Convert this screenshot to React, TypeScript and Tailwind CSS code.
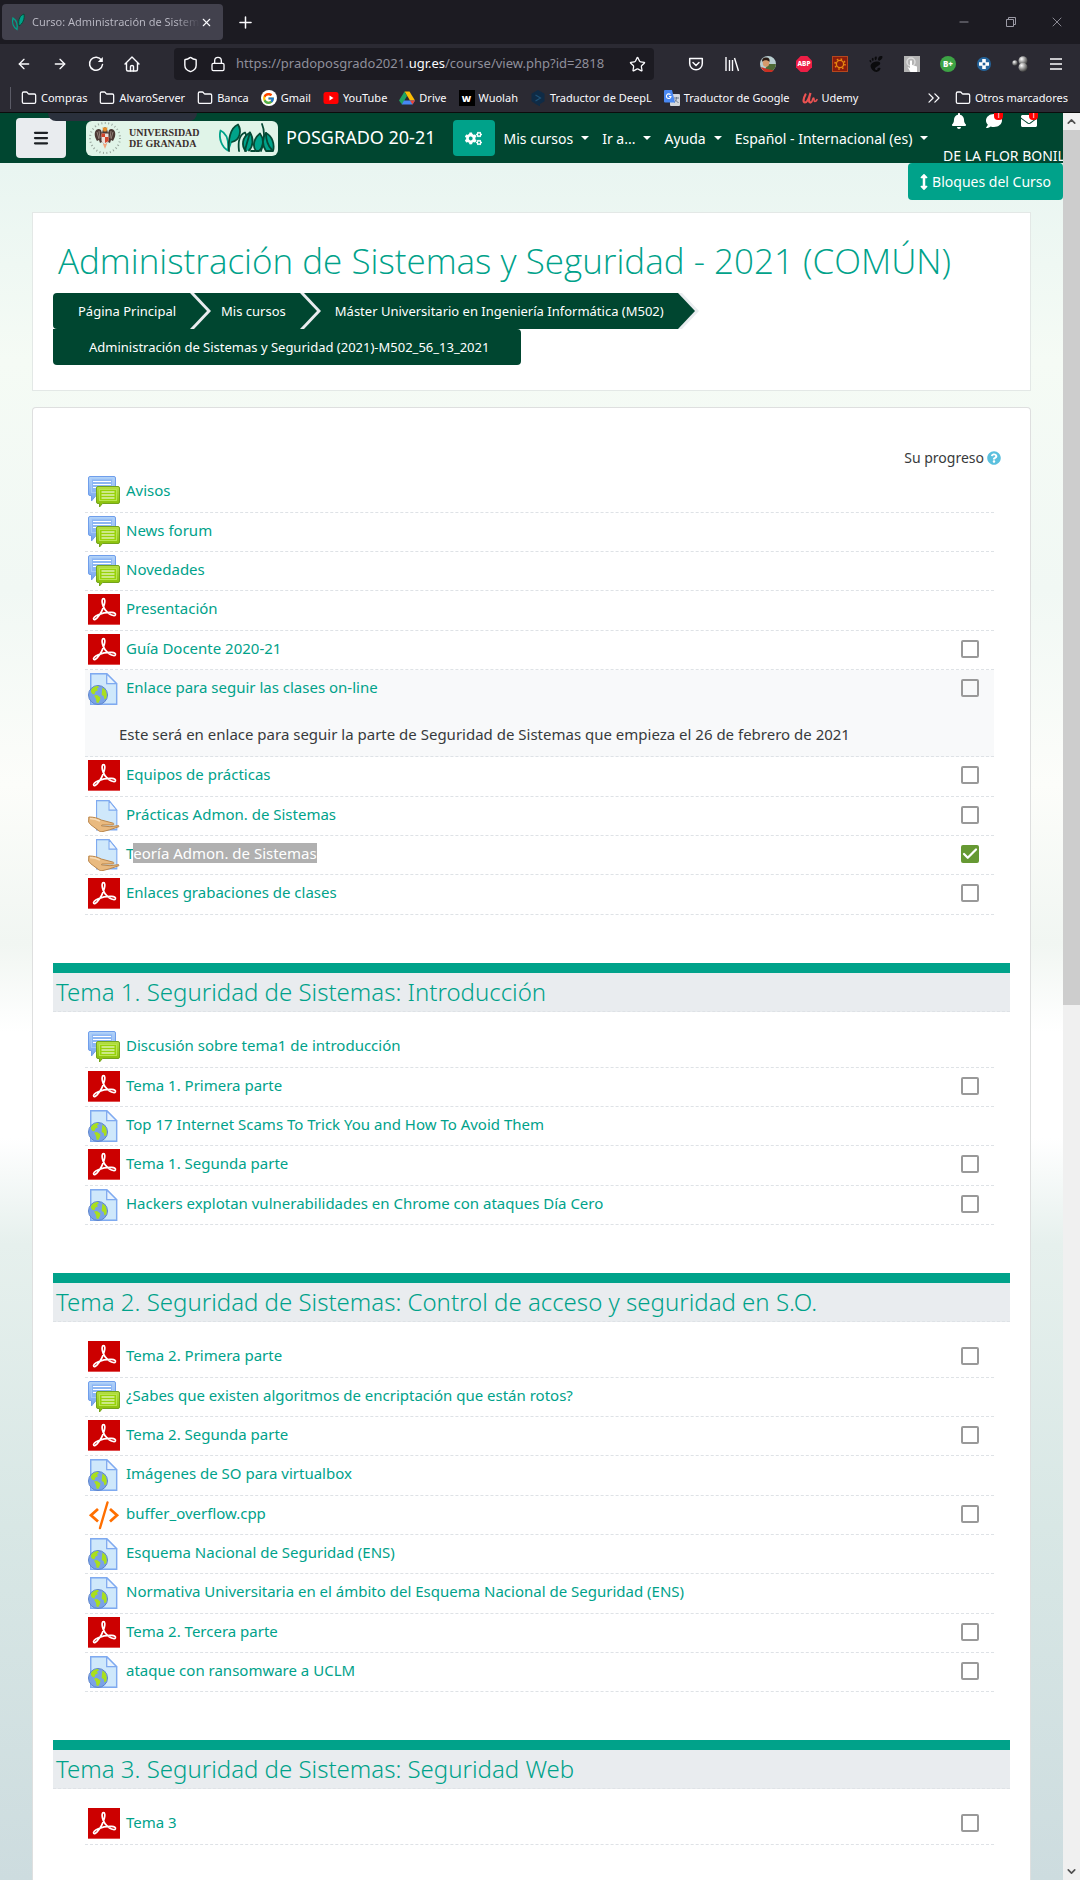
import type { ReactNode } from "react";
import {
  ArrowLeft,
  ArrowRight,
  Check,
  ChevronDown,
  ChevronsRight,
  ChevronUp,
  Copy,
  Folder,
  Lock,
  Menu,
  Minus,
  Plus,
  Shield,
  Star,
  X,
} from "lucide-react";
import { FaArrowsAltV, FaBell, FaCogs, FaComment, FaEnvelope, FaQuestionCircle } from "react-icons/fa";
import { FcGoogle } from "react-icons/fc";
import { SiGnome } from "react-icons/si";

/* ---------- activity icons ---------- */

function PdfIcon() {
  return (
    <svg viewBox="0 0 32 32" className="h-8 w-8">
      <rect width="32" height="30" fill="#c00" />
      <rect y="30" width="32" height="1" fill="#e05050" />
      <path
        d="M15.5 4.6c1.5 0 1.6 2.600.9 5.400-1.200 4.900-4 10.200-7.300 13.900-1.400 1.500-2.700 2.200-3.300 1.600-.9-1 .7-3.300 4.500-4.800 4.200-1.700 9.600-2.500 13.400-2.300 2.900.2 4.200 1.200 3.700 2.400-.6 1.300-3.200.8-5.800-.8-3.300-2.100-6.300-6.200-7.200-10.200-.6-2.700-.3-5.200 1.100-5.200z"
        fill="none"
        stroke="#fff"
        strokeWidth="1.7"
      />
    </svg>
  );
}

function ForumIcon() {
  return (
    <svg viewBox="0 0 32 32" className="h-8 w-8">
      <defs>
        <linearGradient id="fb" x1="0" y1="0" x2="0" y2="1">
          <stop offset="0" stopColor="#b4d4f8" />
          <stop offset="1" stopColor="#76a4ee" />
        </linearGradient>
        <linearGradient id="fg" x1="0" y1="0" x2="0" y2="1">
          <stop offset="0" stopColor="#b5df45" />
          <stop offset="1" stopColor="#84bb00" />
        </linearGradient>
      </defs>
      <path d="M2 .5h24q1.500 0 1.500 1.500v16q0 1.500-1.500 1.500H8L3.500 25V19.500H2Q.5 19.500.5 18V2Q.5.500 2 .5z" fill="url(#fb)" stroke="#6f9eeb" />
      <rect x="3.500" y="3" width="21" height="13.500" fill="#8cb6f3" stroke="#a6c9f8" />
      <path d="M5 5.500h18M5 8.500h18M5 11.500h8" stroke="#fff" strokeWidth="1.100" />
      <path d="M10 10.500h20q1.500 0 1.500 1.500v14q0 1.500-1.500 1.500H14.500L11.500 31V27.500H10Q8.500 27.500 8.500 26V12q0-1.500 1.500-1.500z" fill="url(#fg)" stroke="#73a41c" />
      <rect x="11.500" y="13.500" width="17" height="11" fill="#98d20a" stroke="#b9e64f" />
      <path d="M13.500 16h13M13.500 19h13M13.500 22h13" stroke="#fff" strokeWidth="1.100" />
    </svg>
  );
}

function SheetShape({ x }: { x: number }) {
  return (
    <g transform={`translate(${x} 0)`}>
      <path d="M.7.7h16l10 10v20.600H.7z" fill="#c6e2f9" stroke="#7faaf0" strokeWidth="1.400" />
      <path d="M2 2h14v9.500h9.500V30H2z" fill="#cfe8fb" />
      <path d="M16.700.7v10h10z" fill="#e8f3fd" stroke="#7faaf0" strokeWidth="1.300" strokeLinejoin="round" />
    </g>
  );
}

function UrlIcon() {
  return (
    <svg viewBox="0 0 32 32" className="h-8 w-8">
      <SheetShape x={2} />
      <circle cx="10" cy="22" r="9.500" fill="#7aa2e6" stroke="#5c84cc" />
      <path d="M3 17c1.500-2.500 4-4 7-4.300l.8 1.800-2 1 1.200 1.800-2.500 1.200-1 2.800-2-.3-1.500-2z" fill="#a9df1c" />
      <path d="M6 22.500l3-.5 3.500 2.500-.5 2.500-1.700 3-1.800-.5-.5-3.500z" fill="#a9df1c" />
      <path d="M14.500 14.500l3 2.500 1.200 4-.2 4-2 1.500-.8-3.500-2-1 .3-4z" fill="#a9df1c" />
    </svg>
  );
}

function AssignIcon() {
  return (
    <svg viewBox="0 0 32 32" className="h-8 w-8">
      <g transform="translate(8 0) scale(.78 .95)">
        <SheetShape x={0} />
      </g>
      <path
        d="M.8 17c5 0 9 1 12.500 3l12 3.200c1 .5.600 1.700-.5 1.700l-11 .1-.3.900 8.500.8 8-1c1.300-.1 1.400.6.500 1.100l-9 3-6.500 1.700c-1.500.4-3 .2-4.200-.7L2.500 24.500.6 22z"
        fill="#e9ba80"
        stroke="#bb864a"
        strokeLinejoin="round"
      />
      <path d="M2 18.500c4 .2 7 1 10 2.700" stroke="#f8dcb6" strokeWidth="1.500" fill="none" />
    </svg>
  );
}

function CodeIcon() {
  return (
    <svg viewBox="0 0 32 32" className="h-8 w-8" fill="none" stroke="#ff6f00" strokeWidth="2.800">
      <path d="M10 10L3 16.300l7 6.200M22 10l7 6.300-7 6.200" />
      <path d="M19.500 3.500L12 29" strokeWidth="2.400" strokeLinecap="round" />
    </svg>
  );
}

const ICONS = { pdf: PdfIcon, forum: ForumIcon, url: UrlIcon, assign: AssignIcon, code: CodeIcon };

/* ---------- course data ---------- */

type Box = "off" | "on";
type Item = { kind: keyof typeof ICONS; title: string; box?: Box; note?: string; selectFrom?: number };
type Section = { title?: string; items: Item[] };

const SECTIONS: Section[] = [
  {
    items: [
      { kind: "forum", title: "Avisos" },
      { kind: "forum", title: "News forum" },
      { kind: "forum", title: "Novedades" },
      { kind: "pdf", title: "Presentación" },
      { kind: "pdf", title: "Guía Docente 2020-21", box: "off" },
      {
        kind: "url",
        title: "Enlace para seguir las clases on-line",
        box: "off",
        note: "Este será en enlace para seguir la parte de Seguridad de Sistemas que empieza el 26 de febrero de 2021",
      },
      { kind: "pdf", title: "Equipos de prácticas", box: "off" },
      { kind: "assign", title: "Prácticas Admon. de Sistemas", box: "off" },
      { kind: "assign", title: "Teoría Admon. de Sistemas", box: "on", selectFrom: 1 },
      { kind: "pdf", title: "Enlaces grabaciones de clases", box: "off" },
    ],
  },
  {
    title: "Tema 1. Seguridad de Sistemas: Introducción",
    items: [
      { kind: "forum", title: "Discusión sobre tema1 de introducción" },
      { kind: "pdf", title: "Tema 1. Primera parte", box: "off" },
      { kind: "url", title: "Top 17 Internet Scams To Trick You and How To Avoid Them" },
      { kind: "pdf", title: "Tema 1. Segunda parte", box: "off" },
      { kind: "url", title: "Hackers explotan vulnerabilidades en Chrome con ataques Día Cero", box: "off" },
    ],
  },
  {
    title: "Tema 2. Seguridad de Sistemas: Control de acceso y seguridad en S.O.",
    items: [
      { kind: "pdf", title: "Tema 2. Primera parte", box: "off" },
      { kind: "forum", title: "¿Sabes que existen algoritmos de encriptación que están rotos?" },
      { kind: "pdf", title: "Tema 2. Segunda parte", box: "off" },
      { kind: "url", title: "Imágenes de SO para virtualbox" },
      { kind: "code", title: "buffer_overflow.cpp", box: "off" },
      { kind: "url", title: "Esquema Nacional de Seguridad (ENS)" },
      { kind: "url", title: "Normativa Universitaria en el ámbito del Esquema Nacional de Seguridad (ENS)" },
      { kind: "pdf", title: "Tema 2. Tercera parte", box: "off" },
      { kind: "url", title: "ataque con ransomware a UCLM", box: "off" },
    ],
  },
  {
    title: "Tema 3. Seguridad de Sistemas: Seguridad Web",
    items: [{ kind: "pdf", title: "Tema 3", box: "off" }],
  },
];

/* ---------- browser chrome ---------- */

function TabStrip() {
  return (
    <div className="flex h-11 items-center bg-[#1c1b22] pl-[2px] text-[#fbfbfe]">
      <div className="flex h-9 w-[221px] items-center rounded bg-[#42414d] pl-[9px] pr-[10px]">
        <svg viewBox="0 0 16 18" className="h-[18px] w-4 shrink-0">
          <path d="M2 5c3 2 5 5 4 11.500C2.500 14.500.5 10 2 5z" fill="none" stroke="#00a38a" strokeWidth="1.300" />
          <path d="M13 1C9 2.500 7 6 8 13c3.500-2 6-7 5-12z" fill="#00a38a" stroke="#064a35" />
        </svg>
        <span className="ml-[5px] flex-1 overflow-hidden whitespace-nowrap bg-gradient-to-r from-[#bcbbc6] from-85% to-[#42414d] bg-clip-text text-[11px] leading-5 text-transparent">
          Curso: Administración de Sistem
        </span>
        <button aria-label="Cerrar pestaña" className="shrink-0">
          <X size={13} strokeWidth={2} />
        </button>
      </div>
      <button aria-label="Nueva pestaña" className="ml-[13px]">
        <Plus size={19} strokeWidth={1.9} />
      </button>
      <div className="ml-auto flex items-center gap-[30px] pr-[15px] text-[#9b9aa5]">
        <button aria-label="Minimizar" className="w-4">
          <Minus size={14} strokeWidth={1.5} />
        </button>
        <button aria-label="Restaurar" className="w-4">
          <svg viewBox="0 0 16 16" className="h-4 w-4" fill="none" stroke="currentColor">
            <path d="M3.500 5.500h7v7h-7zM5.500 5.500v-2h7v7h-2" />
          </svg>
        </button>
        <button aria-label="Cerrar" className="w-4">
          <X size={16} strokeWidth={1.3} />
        </button>
      </div>
    </div>
  );
}

function ReloadIcon() {
  return (
    <svg viewBox="0 0 16 16" className="h-4 w-4" fill="none" stroke="currentColor" strokeWidth="1.500">
      <path d="M13.500 4.200A6.500 6.500 0 1 0 14.500 8.500" strokeLinecap="round" />
      <path d="M14.800 1v5H9.800z" fill="currentColor" stroke="none" />
    </svg>
  );
}

function HomeIcon() {
  return (
    <svg viewBox="0 0 16 16" className="h-4 w-4" fill="none" stroke="currentColor" strokeWidth="1.400" strokeLinejoin="round" strokeLinecap="round">
      <path d="M1 8l7-7 7 7M2.500 7v6.500q0 1.500 1.500 1.500h8q1.500 0 1.500-1.500V7" />
      <path d="M6.500 15v-4.500q0-1 1.500-1t1.500 1V15" />
    </svg>
  );
}

const EXTENSIONS: { name: string; icon: ReactNode }[] = [
  {
    name: "Pocket",
    icon: (
      <g fill="none" stroke="#fbfbfe" strokeWidth="1.500" strokeLinecap="round">
        <path d="M1.700 2.500h12.600v5a6.300 6.300 0 0 1-12.600 0z" strokeLinejoin="round" />
        <path d="M5 6.500l3 3 3-3" />
      </g>
    ),
  },
  {
    name: "Biblioteca",
    icon: (
      <g stroke="#fbfbfe" strokeWidth="1.400">
        <path d="M2 1v14M5.500 4v11M8.500 4v11M10.500 2l4 13" />
      </g>
    ),
  },
  {
    name: "Perfil",
    icon: (
      <g>
        <circle cx="8" cy="8" r="8" fill="#b8cdd0" />
        <path d="M8 8h7.900A8 8 0 0 1 4 15z" fill="#4e6a35" />
        <path d="M1 11l6 2 7 1.500A8 8 0 0 1 1 11z" fill="#cc2f22" />
        <ellipse cx="6" cy="6.500" rx="3.300" ry="4.300" fill="#d59a6b" />
        <path d="M2 6C2 2 4 1.300 6.500 1.500S10 3 9.500 6C8 4 4 3.500 2 6z" fill="#2b1b14" />
      </g>
    ),
  },
  {
    name: "Adblock Plus",
    icon: (
      <g>
        <path d="M4.700 0h6.600L16 4.700v6.600L11.300 16H4.700L0 11.300V4.700z" fill="#ed1e45" />
        <text x="8" y="10.300" textAnchor="middle" fontSize="6.500" fontWeight="800" fill="#fff">
          ABP
        </text>
      </g>
    ),
  },
  {
    name: "Engranaje",
    icon: (
      <g>
        <rect width="16" height="16" fill="#8a1c0c" />
        <rect x=".5" y=".5" width="15" height="15" fill="none" stroke="#b5471d" />
        <circle cx="8" cy="8" r="3.600" fill="none" stroke="#e88a10" strokeWidth="1.300" />
        <circle cx="8" cy="8" r="5" fill="none" stroke="#e88a10" strokeWidth="1.500" strokeDasharray="1.600 2.327" />
      </g>
    ),
  },
  { name: "GNOME", icon: <SiGnome size={16} color="#0b0b0d" /> },
  {
    name: "Toque",
    icon: (
      <g>
        <rect width="16" height="16" fill="#b4b4b4" />
        <circle cx="7" cy="6" r="4" fill="none" stroke="#ddd" strokeWidth="1.500" />
        <path d="M6 5q1-1.500 2 0v4l5 1.500V16H6.500L3.500 11l2.500 1z" fill="#fff" />
      </g>
    ),
  },
  {
    name: "B+",
    icon: (
      <g>
        <circle cx="8" cy="8" r="8" fill="#3da345" />
        <text x="8" y="11" textAnchor="middle" fontSize="8" fontWeight="800" fill="#fff">
          B+
        </text>
      </g>
    ),
  },
  {
    name: "Cruz",
    icon: (
      <g>
        <circle cx="8" cy="8" r="7" fill="#25659c" />
        <path d="M6.200 3h3.600v3.200H13v3.600H9.800V13H6.200V9.800H3V6.200h3.200z" fill="#fff" />
        <rect x="6.700" y="6.700" width="2.600" height="2.600" fill="#25659c" />
      </g>
    ),
  },
  {
    name: "Esferas",
    icon: (
      <g>
        <defs>
          <radialGradient id="ball" cx=".35" cy=".3" r=".75">
            <stop offset="0" stopColor="#fff" />
            <stop offset=".4" stopColor="#aaa" />
            <stop offset="1" stopColor="#333" />
          </radialGradient>
        </defs>
        <circle cx="3" cy="7" r="2.700" fill="url(#ball)" />
        <circle cx="11" cy="4.800" r="4.500" fill="url(#ball)" />
        <circle cx="11" cy="11.300" r="4.500" fill="url(#ball)" />
      </g>
    ),
  },
];

function Toolbar() {
  return (
    <div className="flex h-10 items-center bg-[#2b2a33] text-[#fbfbfe]">
      <div className="flex items-center gap-5 pl-4">
        <button aria-label="Atrás">
          <ArrowLeft size={16} />
        </button>
        <button aria-label="Adelante">
          <ArrowRight size={16} />
        </button>
        <button aria-label="Recargar">
          <ReloadIcon />
        </button>
        <button aria-label="Inicio">
          <HomeIcon />
        </button>
      </div>
      <div className="ml-[34px] flex h-8 flex-1 items-center rounded bg-[#1c1b22] px-2">
        <Shield size={17} strokeWidth={2} />
        <Lock size={16} strokeWidth={2} className="ml-[11px]" />
        <div role="textbox" aria-label="Dirección" className="ml-[10px] flex-1 whitespace-nowrap text-[13px] text-[#8f8f9b]">
          https://pradoposgrado2021.<span className="text-[#fbfbfe]">ugr.es</span>/course/view.php?id=2818
        </div>
        <button aria-label="Añadir marcador">
          <Star size={17} strokeWidth={1.8} />
        </button>
      </div>
      <div className="ml-[34px] flex items-center gap-5 pr-4">
        {EXTENSIONS.map((e) => (
          <button key={e.name} aria-label={e.name} className="h-4 w-4">
            <svg viewBox="0 0 16 16" className="h-4 w-4">
              {e.icon}
            </svg>
          </button>
        ))}
        <button aria-label="Menú" className="h-4 w-4">
          <svg viewBox="0 0 16 16" className="h-4 w-4">
            <path d="M2 3h12M2 8h12M2 13h12" stroke="#fbfbfe" strokeWidth="1.600" />
          </svg>
        </button>
      </div>
    </div>
  );
}

const folder = <Folder size={16} strokeWidth={1.9} />;

const BOOKMARKS: { name: string; icon: ReactNode }[] = [
  { name: "Compras", icon: folder },
  { name: "AlvaroServer", icon: folder },
  { name: "Banca", icon: folder },
  {
    name: "Gmail",
    icon: (
      <span className="grid h-4 w-4 place-items-center rounded-full bg-white">
        <FcGoogle size={13} />
      </span>
    ),
  },
  {
    name: "YouTube",
    icon: (
      <svg viewBox="0 0 16 16" className="h-4 w-4">
        <rect x=".5" y="2" width="15" height="12" rx="2.500" fill="#f00" />
        <path d="M6.500 5.500v5l4-2.500z" fill="#fff" />
      </svg>
    ),
  },
  {
    name: "Drive",
    icon: (
      <svg viewBox="0 0 16 16" className="h-4 w-4">
        <path d="M5.500 1.500h5L16 10.500h-5z" fill="#fbbc04" />
        <path d="M5.500 1.500L8 6 3 14.500 0 10.500z" fill="#1fa463" />
        <path d="M5 10.500h11L13.500 14.500H2.700z" fill="#4688f4" />
        <path d="M11 10.500h5l-2.500 4z" fill="#ea4335" />
      </svg>
    ),
  },
  {
    name: "Wuolah",
    icon: (
      <span className="grid h-4 w-4 place-items-center bg-black font-['Open_Sans',sans-serif] text-[9px] font-extrabold leading-none text-white">
        W
      </span>
    ),
  },
  {
    name: "Traductor de DeepL",
    icon: (
      <svg viewBox="0 0 16 16" className="h-4 w-4">
        <path d="M8 0l6.500 3.700v7.600L10 14v2.500l-3-1.800L1.500 11.300V3.700z" fill="#0f2b46" />
        <path d="M5.500 5l5 3-5 3" fill="none" stroke="#1f5276" strokeWidth="1.200" />
      </svg>
    ),
  },
  {
    name: "Traductor de Google",
    icon: (
      <svg viewBox="0 0 16 16" className="h-4 w-4">
        <rect x="6" y="4" width="10" height="12" rx="1" fill="#d4d7dc" />
        <path d="M10 8h5M12.500 7v1c0 2-1 3.500-2.500 4.500M11 9.500c1 1.500 2 2.500 3.500 3" stroke="#6b7a8c" fill="none" />
        <path d="M1 0h7l3 12.500H1q-1 0-1-1V1q0-1 1-1z" fill="#4a89f3" />
        <path d="M6.500 4.700A2.300 2.300 0 1 0 7 6.500H5" fill="none" stroke="#fff" strokeWidth="1.100" />
      </svg>
    ),
  },
  {
    name: "Udemy",
    icon: (
      <svg viewBox="0 0 16 16" className="h-4 w-4" fill="none" stroke="#ec5252" strokeLinecap="round">
        <path d="M3.500 4.500C1 9 1 12.500 3 12.500S7 8 8.500 3C6.500 9 6.500 12.500 8.500 12.500" strokeWidth="2.200" />
        <path d="M8.500 12.500c2.500 0 1.500-4.500 3-4.500 1.200 0-.2 3.500 1.500 3.500 1 0 1.500-.8 2-1.800" strokeWidth="1.600" />
      </svg>
    ),
  },
];

function BookmarkBar() {
  return (
    <div className="flex h-[29px] items-center border-b border-[#0c0c0d] bg-[#2b2a33] pl-[10px] pr-3 text-[11px] text-[#fbfbfe]">
      <span className="h-[22px] w-px bg-[#5b5b66]" />
      <ul className="ml-[10px] flex gap-3">
        {BOOKMARKS.map((b) => (
          <li key={b.name}>
            <a href="#" className="flex items-center gap-1 whitespace-nowrap">
              {b.icon}
              {b.name}
            </a>
          </li>
        ))}
      </ul>
      <button aria-label="Más marcadores" className="ml-auto">
        <ChevronsRight size={20} strokeWidth={1.5} />
      </button>
      <button className="ml-[11px] flex items-center gap-1 whitespace-nowrap">
        {folder}
        Otros marcadores
      </button>
    </div>
  );
}

/* ---------- site header ---------- */

function Crest() {
  return (
    <svg viewBox="0 0 34 34" className="h-[34px] w-[34px]">
      <circle cx="17" cy="17" r="15" fill="none" stroke="#9aa89f" strokeWidth="2" strokeDasharray="1 2.500" />
      <path d="M7 11c1-3 4-4 6-2l1 3 1-4 2-2 2 2 1 4 1-3c2-2 5-1 6 2 1 4-1 7-2 9l-2-1-1 3-2-1-3 3-3-3-2 1-1-3-2 1c-1-2-3-5-2-9z" fill="#4a3833" />
      <path d="M9 11l2 7M11 10l1 7M25 11l-2 7M23 10l-1 7" stroke="#a3928a" strokeWidth=".8" />
      <path d="M13.500 12.500h7v7c0 2-2 3-3.500 4-1.500-1-3.500-2-3.500-4z" fill="#eadfd8" />
      <path d="M13.500 12.500H17V16h-3.500zM17 16h3.500v4L17 22z" fill="#d2452b" />
      <path d="M14.500 6.500h5l-1 4h-3z" fill="#e88f2a" />
      <path d="M15 23l2 5 2-5z" fill="#f2a77c" />
    </svg>
  );
}

function PradoMark() {
  return (
    <svg viewBox="0 0 56 30" className="h-[30px] w-14" fill="#00a38a" stroke="#064a35" strokeWidth="1.800" strokeLinejoin="round" strokeLinecap="round">
      <path d="M1.500 7.500C7 10 10 17 9 27.500 2.500 24-.5 15 1.500 7.500z" fill="#e0f4e8" stroke="#00a38a" />
      <path d="M10 28C9 17 11 5 19 1.500 23 8 21 17 13 19" />
      <path d="M20 28c-1-8 0-16 6-18.500 2 3 1 6-1 8" fill="none" />
      <path d="M27 28c-5-5-4-14 4-18.500 4 6 3 14-1 18" />
      <path d="M26 28c1-6 3-11 5-18.500M32 28h4" fill="none" />
      <path d="M37 28c-4-5-2-13 4-17.500 4 5 4 13-1 17.500z" />
      <path d="M43 1c3 7 2 18-1 27" fill="none" />
      <path d="M47 28c-4-6-4-13 0-18 6 3 9 11 7 18z" />
      <path d="M47 10c0 7 2 13 6 17" fill="none" />
    </svg>
  );
}

const MENUS = ["Mis cursos", "Ir a...", "Ayuda", "Español - Internacional (es)"];

const ALERTS = [
  { name: "Notificaciones", Icon: FaBell, count: null },
  { name: "Mensajes", Icon: FaComment, count: "1" },
  { name: "Correo", Icon: FaEnvelope, count: "1" },
];

function SiteNav() {
  return (
    <header className="relative flex h-[50px] shrink-0 items-center overflow-hidden bg-[#004630] pl-4 text-white">
      <button aria-label="Panel lateral" className="grid h-10 w-[50px] shrink-0 place-items-center rounded bg-[#e9ecef] text-[#1d2125]">
        <Menu size={18} strokeWidth={3} />
      </button>
      <span className="absolute left-12 top-0 h-2 w-[149px] rounded-b-lg bg-[#2a303c]" />
      <a href="#" className="ml-5 flex h-[35px] w-48 shrink-0 items-center rounded-md bg-[#e0f4e8] pl-[2px] pr-[3px] text-[#3b2f2d]">
        <Crest />
        <span className="ml-[7px] whitespace-nowrap font-['Liberation_Serif',serif] text-[10px] font-bold leading-[11px]">
          UNIVERSIDAD
          <br />
          DE GRANADA
        </span>
        <span className="ml-auto">
          <PradoMark />
        </span>
      </a>
      <a href="#" className="ml-2 whitespace-nowrap pb-[3px] text-[18px] leading-6">
        POSGRADO 20-21
      </a>
      <button aria-label="Ajustes" className="ml-[17px] grid h-9 w-[42px] shrink-0 place-items-center rounded bg-[#00a28a]">
        <FaCogs size={17} />
      </button>
      <nav className="ml-[9px] flex gap-[13px] text-[14px]">
        {MENUS.map((m) => (
          <button key={m} className="flex items-center gap-2 whitespace-nowrap">
            {m}
            <span className="border-x-4 border-t-4 border-x-transparent border-t-white" />
          </button>
        ))}
      </nav>
      <div className="ml-auto flex w-[120px] shrink-0 flex-col self-stretch overflow-hidden">
        <div className="flex gap-[19px] pl-2">
          {ALERTS.map(({ name, Icon, count }) => (
            <button key={name} aria-label={name} className="relative h-4 w-4">
              <Icon size={16} />
              {count && (
                <span className="absolute -top-1 left-2 grid h-[11px] w-[9px] place-items-center rounded-sm bg-[#f00] text-[8px] leading-none">
                  {count}
                </span>
              )}
            </button>
          ))}
        </div>
        <button className="mt-[17px] whitespace-nowrap text-left text-[14px] leading-5">DE LA FLOR BONIL</button>
      </div>
    </header>
  );
}

/* ---------- course page ---------- */

function CrumbArrow() {
  return (
    <svg viewBox="0 0 21 36" className="h-9 w-[21px]">
      <path d="M0 0h4l17 18L4 36H0z" fill="#e9ecef" />
      <path d="M0 0l17 18L0 36z" fill="#004630" />
    </svg>
  );
}

function CrumbLink({ children }: { children: ReactNode }) {
  return (
    <a href="#" className="whitespace-nowrap pt-[2px] text-[13px] text-white">
      {children}
    </a>
  );
}

function CourseHeader() {
  return (
    <section className="border border-[#e3e8e6] bg-white px-5 pb-[25px] pt-6">
      <h1 className="pl-[5px] font-['Open_Sans',sans-serif] text-[35px] font-light leading-[48px] text-[#00a28a]">
        Administración de Sistemas y Seguridad - 2021 (COMÚN)
      </h1>
      <ol className="mt-2 flex flex-wrap">
        <li className="flex h-9 items-center gap-[14px] rounded-l bg-[#004630] pl-[25px]">
          <CrumbLink>Página Principal</CrumbLink>
          <CrumbArrow />
        </li>
        <li className="flex h-9 items-center gap-[14px] bg-[#004630] pl-[10px]">
          <CrumbLink>Mis cursos</CrumbLink>
          <CrumbArrow />
        </li>
        <li className="flex h-9 items-center">
          <span className="flex h-9 items-center bg-[#004630] px-[14px]">
            <CrumbLink>Máster Universitario en Ingeniería Informática (M502)</CrumbLink>
          </span>
          <CrumbArrow />
        </li>
        <li className="flex h-9 items-center rounded-r rounded-bl bg-[#004630] pl-9 pr-8">
          <CrumbLink>Administración de Sistemas y Seguridad (2021)-M502_56_13_2021</CrumbLink>
        </li>
      </ol>
    </section>
  );
}

function Completion({ item }: { item: Item }) {
  return (
    <span className="mr-[15px] mt-[6px] grid h-[18px] w-[18px] shrink-0 text-white">
      <input
        type="checkbox"
        defaultChecked={item.box === "on"}
        aria-label={`Finalización: ${item.title}`}
        className="col-start-1 row-start-1 h-[18px] w-[18px] appearance-none rounded-xs border-2 border-[#999] checked:border-[#669933] checked:bg-[#669933]"
      />
      {item.box === "on" && <Check size={18} strokeWidth={3} className="pointer-events-none col-start-1 row-start-1" />}
    </span>
  );
}

function Activity({ item }: { item: Item }) {
  const Icon = ICONS[item.kind];
  const cut = item.selectFrom ?? item.title.length;
  return (
    <li
      className={
        item.note
          ? "border-b border-dashed border-[#dee2e6] bg-[#f8f9fa] pb-[11px] pl-[3px] pt-[3px]"
          : "h-[39px] border-b border-dashed border-[#dee2e6] pl-[3px] pt-[3px] nth-[3n+1]:h-10"
      }
    >
      <div className="flex items-start">
        <a href="#" className="flex h-7 flex-1 items-start gap-[6px] text-[#00a28a]">
          <span className="shrink-0">
            <Icon />
          </span>
          <span className="leading-7">
            {item.title.slice(0, cut)}
            {cut < item.title.length && <span className="bg-[#b0b0b0] text-white">{item.title.slice(cut)}</span>}
          </span>
        </a>
        {item.box && <Completion item={item} />}
      </div>
      {item.note && <p className="mt-[22px] pl-[31px] leading-[22px] text-[#373a3c]">{item.note}</p>}
    </li>
  );
}

function SectionBlock({ section }: { section: Section }) {
  return (
    <section className="mb-12">
      {section.title && (
        <h2 className="mb-4 border-b border-t-10 border-b-[#dee2e6] border-t-[#00a28a] bg-[#e9ecef] pl-[3px] text-[24px] font-light leading-[38px] text-[#00a28a] [border-bottom-style:dashed]">
          {section.title}
        </h2>
      )}
      <ul className="ml-8 mr-4">
        {section.items.map((item) => (
          <Activity key={item.title} item={item} />
        ))}
      </ul>
    </section>
  );
}

function Scrollbar() {
  return (
    <div aria-hidden="true" className="flex w-[17px] shrink-0 flex-col bg-[#f0f0f0] text-[#505050]">
      <span className="grid h-[17px] place-items-center">
        <ChevronUp size={13} strokeWidth={3} />
      </span>
      <span className="flex-[875] bg-[#cdcdcd]" />
      <span className="flex-[858]" />
      <span className="grid h-[17px] place-items-center">
        <ChevronDown size={13} strokeWidth={3} />
      </span>
    </div>
  );
}

export default function App() {
  return (
    <div className="flex h-screen flex-col overflow-hidden font-['Noto_Sans',sans-serif] text-[15px]">
      <TabStrip />
      <Toolbar />
      <BookmarkBar />
      <div className="flex min-h-0 flex-1">
        <div className="flex min-w-0 flex-1 flex-col bg-[linear-gradient(180deg,#e9f5f1_3%,#f5fbf5_14%,#f1f8f4_27%,#fcfdfa_38%,#f1f6f2_47%,#ffffff_52%,#ffffff_58%,#e6f0ed_64%,#d8e7e5_80%,#cddcdf_100%)]">
          <SiteNav />
          <div className="flex justify-end">
            <button className="flex h-[37px] items-center gap-1 rounded bg-[#00a28a] pl-3 pr-3 text-[14px] text-white">
              <FaArrowsAltV size={8} className="h-4 w-2" />
              Bloques del Curso
            </button>
          </div>
          <main className="mx-8 mt-3 flex min-h-0 flex-1 flex-col">
            <CourseHeader />
            <div className="mt-4 flex-1 rounded-t border border-b-0 border-[#dedfdf] bg-white px-5 pt-[38px]">
              <p className="mb-[3px] flex items-center justify-end gap-[3px] pr-[9px] text-[14px] leading-6 text-[#373a3c]">
                Su progreso
                <button aria-label="Ayuda con Su progreso" className="text-[#5bc0de]">
                  <FaQuestionCircle size={14} />
                </button>
              </p>
              {SECTIONS.map((s, i) => (
                <SectionBlock key={i} section={s} />
              ))}
            </div>
          </main>
        </div>
        <Scrollbar />
      </div>
    </div>
  );
}
